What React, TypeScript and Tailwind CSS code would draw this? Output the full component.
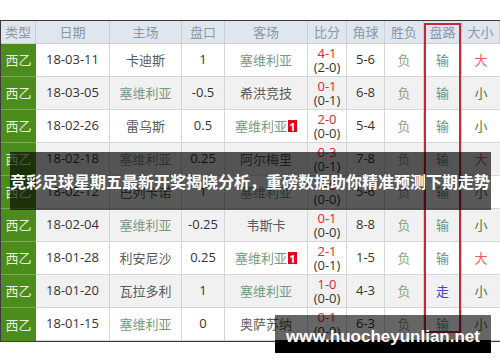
import React from "react";

type Row = {
  date: string;
  home: string;
  hc: string;
  away: string;
  badge?: "home" | "away";
  s1: string;
  s2: string;
  corner: string;
  lu: string;
};

const rows: Row[] = [
  { date: "18-03-11", home: "卡迪斯", hc: "1", away: "塞维利亚", s1: "4-1", s2: "(2-0)", corner: "5-6", lu: "大" },
  { date: "18-03-05", home: "塞维利亚", hc: "-0.5", away: "希洪竞技", s1: "0-1", s2: "(0-1)", corner: "6-8", lu: "小" },
  { date: "18-02-26", home: "雷乌斯", hc: "0.5", away: "塞维利亚", badge: "away", s1: "2-0", s2: "(0-0)", corner: "5-4", lu: "小" },
  { date: "18-02-18", home: "塞维利亚", hc: "0.25", away: "阿尔梅里", s1: "0-3", s2: "(0-1)", corner: "7-8", lu: "大" },
  { date: "18-02-12", home: "巴列卡诺", hc: "1", away: "塞维利亚", s1: "1-0", s2: "(0-0)", corner: "5-6", lu: "小" },
  { date: "18-02-04", home: "塞维利亚", hc: "-0.25", away: "韦斯卡", s1: "0-1", s2: "(0-0)", corner: "8-8", lu: "小" },
  { date: "18-01-28", home: "利安尼沙", hc: "0.25", away: "塞维利亚", badge: "away", s1: "2-1", s2: "(0-1)", corner: "1-5", lu: "大" },
  { date: "18-01-20", home: "瓦拉多利", hc: "1", away: "塞维利亚", s1: "1-0", s2: "(0-0)", corner: "4-3", lu: "小" },
  { date: "18-01-15", home: "塞维利亚", hc: "0", away: "奥萨苏纳", s1: "0-1", s2: "(0-0)", corner: "6-3", lu: "小" },
];

const grid =
  "grid grid-cols-[35px_74px_72px_43px_83px_39px_38px_39px_38px_38px]";
const cjk = { fontFamily: '"Noto Sans CJK SC", "Noto Sans", sans-serif' };
const num = { fontFamily: '"Open Sans", "Noto Sans", sans-serif' };

function Team({ name, badge }: { name: string; badge?: boolean }) {
  const isSev = name === "塞维利亚";
  return (
    <span className="flex items-center">
      <span className={isSev ? "text-[#789a82]" : "text-[#5a5a5a]"}>{name}</span>
      {badge && (
        <span
          className="ml-[1px] flex h-[12px] w-[9px] items-center justify-center bg-[#e60012] text-[11px] font-bold leading-none text-white"
          style={num}
        >
          1
        </span>
      )}
    </span>
  );
}

export default function App() {
  const headers = ["类型", "日期", "主场", "盘口", "客场", "比分", "角球", "胜负", "盘路", "大小"];
  return (
    <div className="relative h-[362px] w-[500px] overflow-hidden bg-white">
      <div className="pt-[20px]">
        <div className="border-b border-l border-t border-[#3a3a3a]">
          <div className={`${grid} h-[23px] bg-[#dfe6ee] text-[13px] text-[#8a98a6]`} style={cjk}>
            {headers.map((h) => (
              <div key={h} className="flex items-center justify-center border-b border-r border-[#c9cfd6]">
                {h}
              </div>
            ))}
          </div>
          {rows.map((r, i) => (
            <div
              key={r.date}
              className={`${grid} h-[33px] text-[13px] ${i % 2 === 1 ? "bg-[#f1f1f1]" : "bg-white"}`}
            >
              <div
                className={`flex items-center justify-center bg-[#4b8c1d] text-[#e6f2da] ${i < rows.length - 1 ? "border-b border-[#79ab55]" : ""}`}
                style={cjk}
              >
                西乙
              </div>
              <div className="flex items-center justify-center border-b border-r border-[#d6d6d6] text-[#333]" style={num}>
                {r.date}
              </div>
              <div className="flex items-center justify-center border-b border-r border-[#d6d6d6]" style={cjk}>
                <Team name={r.home} badge={r.badge === "home"} />
              </div>
              <div className="flex items-center justify-center border-b border-r border-[#d6d6d6] text-[#333]" style={num}>
                {r.hc}
              </div>
              <div className="flex items-center justify-center border-b border-r border-[#d6d6d6]" style={cjk}>
                <Team name={r.away} badge={r.badge === "away"} />
              </div>
              <div
                className="flex flex-col items-center justify-center border-b border-r border-[#d6d6d6] leading-[14px]"
                style={num}
              >
                <span className="text-[#e8242c]">{r.s1}</span>
                <span className="text-[#333]">{r.s2}</span>
              </div>
              <div className="flex items-center justify-center border-b border-r border-[#d6d6d6] text-[#333]" style={num}>
                {r.corner}
              </div>
              <div className="flex items-center justify-center border-b border-r border-[#d6d6d6] text-[#8f9e80]" style={cjk}>
                负
              </div>
              <div
                className={`flex items-center justify-center border-b border-r border-[#d6d6d6] ${r.date === "18-01-20" ? "text-[#4a3fd6]" : "text-[#6f9478]"}`}
                style={cjk}
              >
                {r.date === "18-01-20" ? "走" : "输"}
              </div>
              <div
                className={`flex items-center justify-center border-b border-[#d6d6d6] ${r.lu === "大" ? "text-[#ec5a5a]" : "text-[#3f7f52]"}`}
                style={cjk}
              >
                {r.lu}
              </div>
            </div>
          ))}
        </div>
      </div>

      {/* red highlight box on 盘路 column */}
      <div className="pointer-events-none absolute left-[424px] top-[23px] h-[310px] w-[37px] border-2 border-[#c4283a]" />

      {/* title banner */}
      <div className="absolute left-[10px] top-[152px] flex h-[58px] w-[481px] items-center bg-black/65">
        <span className="whitespace-nowrap text-[16px] font-bold leading-none text-white" style={cjk}>
          竞彩足球星期五最新开奖揭晓分析，重磅数据助你精准预测下期走势
        </span>
      </div>

      {/* watermark */}
      <div className="absolute left-[275px] top-[315px] h-[38px] w-[216px]">
        <div className="h-[25px] bg-black/60" />
        <div className="h-[13px] bg-black" />
        <div
          className="absolute inset-0 flex items-center justify-center pt-[5px] text-[17px] font-bold leading-none text-white"
          style={{ fontFamily: '"Liberation Sans", Arial, sans-serif' }}
        >
          www.huocheyunlian.net
        </div>
      </div>
    </div>
  );
}
